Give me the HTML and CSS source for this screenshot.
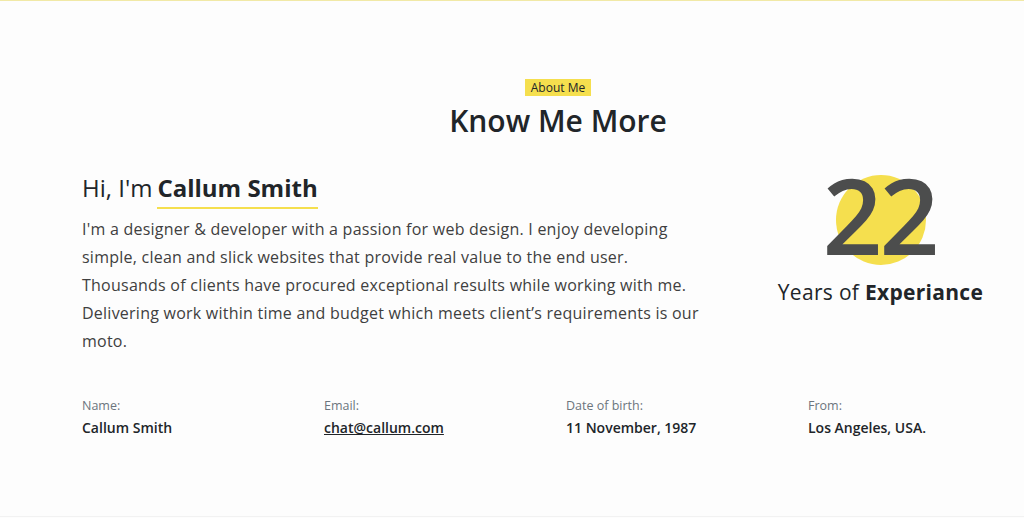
FILE: index.html
```html
<!DOCTYPE html>
<html lang="en">
<head>
<meta charset="utf-8">
<title>About Me</title>
<link rel="stylesheet" href="styles.css">
</head>
<body>
<section class="about">
  <header class="title">
    <span class="badge">About Me</span>
    <h2 class="heading">Know Me More</h2>
  </header>
  <div class="row">
    <div class="intro">
      <h3 class="hello">Hi, I'm <span class="name">Callum Smith</span></h3>
      <p class="bio">I'm a designer &amp; developer with a passion for web design. I enjoy developing simple, clean and slick websites that provide real value to the end user. Thousands of clients have procured exceptional results while working with me. Delivering work within time and budget which meets client’s requirements is our moto.</p>
    </div>
    <div class="exp">
      <div class="years"><span class="circle"></span><span class="num">22</span></div>
      <h3 class="exp-text">Years of <b>Experiance</b></h3>
    </div>
  </div>
  <div class="info">
    <div class="item"><p class="label">Name:</p><p class="value">Callum Smith</p></div>
    <div class="item"><p class="label">Email:</p><p class="value"><a href="#">chat@callum.com</a></p></div>
    <div class="item"><p class="label">Date of birth:</p><p class="value">11 November, 1987</p></div>
    <div class="item"><p class="label">From:</p><p class="value">Los Angeles, USA.</p></div>
  </div>
</section>
</body>
</html>
```

FILE: styles.css
```css
* { box-sizing: border-box; }
html, body { margin: 0; padding: 0; }
body {
  width: 1024px;
  height: 518px;
  overflow: hidden;
  background: #fdfdfd;
  font-family: "Open Sans", "Liberation Sans", sans-serif;
  color: #4c4d4d;
  border-top: 1px solid #f1e9a6;
}
.about {
  height: 516px;
  padding: 78px 0 0 82px;
  border-bottom: 1px solid #f2f2f2;
}
.title {
  display: flex;
  flex-direction: column;
  align-items: center;
  padding-left: 10px;
}
.badge {
  background: #f5df4e;
  color: #212529;
  font-size: 12px;
  line-height: 17px;
  padding: 0 6px;
}
.heading {
  margin: 5px 0 0;
  font-size: 30px;
  line-height: 40px;
  font-weight: 600;
  color: #212529;
}
.row {
  display: grid;
  grid-template-columns: 633px 1fr;
  margin-top: 31px;
}
.hello {
  margin: 0;
  display: flex;
  gap: 5px;
  align-items: flex-start;
  font-size: 24px;
  line-height: 32px;
  font-weight: 400;
  color: #212529;
}
.name {
  font-weight: 700;
  padding-bottom: 3px;
  border-bottom: 2px solid #f5df4e;
}
.bio {
  margin: 6px 0 0;
  width: 625px;
  font-size: 16px;
  letter-spacing: 0.24px;
  line-height: 28px;
  color: #3f4040;
}
.exp {
  display: flex;
  flex-direction: column;
  align-items: center;
  padding-left: 22px;
}
.years {
  position: relative;
  height: 96px;
  width: 130px;
  display: flex;
  justify-content: center;
  align-items: center;
}
.circle {
  position: absolute;
  left: 20px;
  top: 3px;
  width: 90px;
  height: 90px;
  border-radius: 50%;
  background: #f5df4e;
}
.num {
  position: relative;
  top: -5px;
  left: -1px;
  font-size: 105px;
  line-height: 80px;
  font-weight: 600;
  color: #4c4d4d;
  letter-spacing: -3px;
}
.exp-text {
  margin: 10px 0 0;
  font-size: 21px;
  letter-spacing: 0.3px;
  line-height: 28px;
  font-weight: 400;
  color: #212529;
}
.exp-text b { font-weight: 700; }
.info {
  display: grid;
  grid-template-columns: repeat(3, 242px) 1fr;
  margin-top: 42px;
}
.label {
  margin: 0;
  font-size: 12.5px;
  line-height: 18px;
  color: #6c757d;
}
.value {
  margin: 3px 0 0;
  font-size: 14px;
  line-height: 20px;
  font-weight: 600;
  color: #212529;
}
.value a {
  color: #212529;
  text-decoration: underline;
}
```
